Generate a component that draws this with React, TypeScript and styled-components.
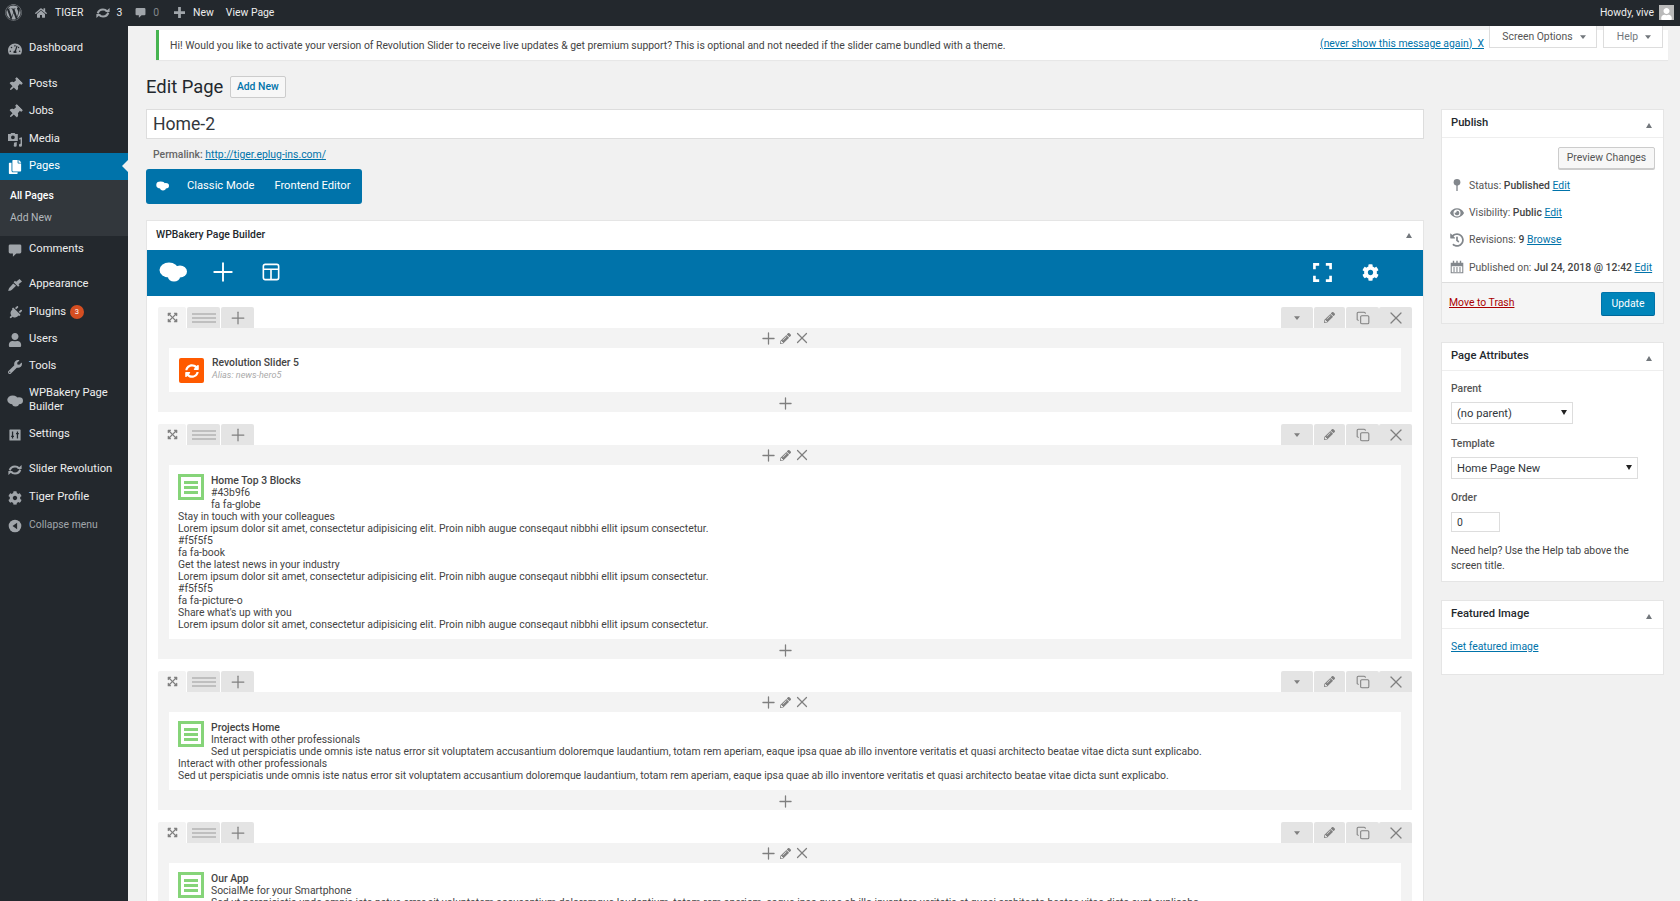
import React from "react";
import styled, { createGlobalStyle } from "styled-components";
import {
  FaWordpress, FaHome, FaTachometerAlt, FaThumbtack, FaCopy, FaPlug, FaUser, FaWrench,
  FaCog, FaExpandArrowsAlt, FaPencilAlt, FaEye, FaHistory, FaSyncAlt,
} from "react-icons/fa";
import { Plus, X, Copy } from "lucide-react";

const Global = createGlobalStyle`
  html, body { margin: 0; padding: 0; height: 901px; overflow: hidden; background: #f1f1f1; }
  body { font-family: Roboto, "Liberation Sans", sans-serif; font-size: 10.4px; color: #444; }
  * { box-sizing: border-box; }
  a { color: #0073aa; }
`;

/* ---------- hand drawn glyphs ---------- */
const UpdateGlyph = () => (
  <svg viewBox="0 0 20 14" width="100%" height="100%" fill="none" stroke="currentColor" strokeWidth="3">
    <path d="M2.500 7.500C3.500 4 6.500 2 10 2c2.400 0 4.300.9 5.600 2.400" />
    <path d="M17.500 6.500C16.500 10 13.500 12 10 12c-2.400 0-4.300-.9-5.600-2.400" />
    <path d="M13 5.600h6.500V0z" fill="currentColor" stroke="none" />
    <path d="M7 8.400H.5V14z" fill="currentColor" stroke="none" />
  </svg>
);
const BubbleGlyph = () => (
  <svg viewBox="0 0 20 20" width="100%" height="100%" fill="currentColor">
    <path d="M3 2h14a2 2 0 0 1 2 2v9a2 2 0 0 1-2 2h-5l-5 4.500V15H3a2 2 0 0 1-2-2V4a2 2 0 0 1 2-2z" />
  </svg>
);
const MediaGlyph = () => (
  <svg viewBox="0 0 20 20" width="100%" height="100%" fill="currentColor">
    <path d="M0 1.500h3.500L4.500 0h5l1 1.500H14v10H0zM7 3.500a2.700 2.700 0 1 0 0 5.400 2.700 2.700 0 0 0 0-5.400z" fillRule="evenodd" />
    <path d="M16 7l4-1v11.500a2.200 2.200 0 1 1-2-2.200V9l-2 .5zM8.500 14l4-1v4.500a2.200 2.200 0 1 1-2-2.200V15.200l-2 .5z" />
  </svg>
);
const BrushGlyph = () => (
  <svg viewBox="0 0 20 20" width="100%" height="100%" fill="currentColor">
    <path d="M20 5l-3.500-3.500-5 4-1.500-1.500-2 2 6.500 6.500 2-2-1.500-1.500z" />
    <path d="M7.500 8L2 14c-1.200 1.300-.8 2.800-2 4.200 2.200.5 4.500 0 6-1.700l5.500-5.500z" />
  </svg>
);
const CloudGlyph = () => (
  <svg viewBox="0 0 28 20" width="100%" height="100%" fill="currentColor">
    <ellipse cx="10" cy="8" rx="9.500" ry="7.500" />
    <ellipse cx="21" cy="9.500" rx="7" ry="6" />
    <ellipse cx="15" cy="15" rx="6" ry="4.500" />
  </svg>
);
const SettingsGlyph = () => (
  <svg viewBox="0 0 20 20" width="100%" height="100%">
    <rect x="2" y="2" width="16" height="16" rx="1" fill="currentColor" />
    <path d="M6.500 5v10M13.500 5v10M4.500 12h4M11.500 8h4" stroke="#23282d" strokeWidth="1.800" fill="none" />
  </svg>
);
const CollapseGlyph = () => (
  <svg viewBox="0 0 20 20" width="100%" height="100%">
    <circle cx="10" cy="10" r="9" fill="currentColor" />
    <path d="M13 5.500v9L6.500 10z" fill="#23282d" />
  </svg>
);
const PinGlyph = () => (
  <svg viewBox="0 0 12 20" width="100%" height="100%" fill="currentColor">
    <circle cx="6" cy="6" r="5" />
    <rect x="5" y="8" width="2" height="11" />
  </svg>
);
const CalendarGlyph = () => (
  <svg viewBox="0 0 20 20" width="100%" height="100%" fill="currentColor">
    <path d="M1 4h18v15H1zm1.500 5v8.500h15V9z" fillRule="evenodd" />
    <path d="M4 1h2v4.500H4zM9 1h2v4.500H9zM14 1h2v4.500h-2zM5 10h1.500v7H5zM9.200 10h1.500v7H9.200zM13.500 10H15v7h-1.500z" />
  </svg>
);
const LayoutGlyph = () => (
  <svg viewBox="0 0 20 20" width="100%" height="100%" fill="none" stroke="currentColor" strokeWidth="1.800">
    <rect x="1.500" y="1.500" width="17" height="17" rx="2" />
    <path d="M1.500 7h17M10 7v11.500" />
  </svg>
);
const FullscreenGlyph = () => (
  <svg viewBox="0 0 20 20" width="100%" height="100%" fill="none" stroke="currentColor" strokeWidth="2.800">
    <path d="M1.500 6.500v-5h5M13.500 1.500h5v5M18.500 13.500v5h-5M6.500 18.500h-5v-5" />
  </svg>
);
const BarsGlyph = () => (
  <svg viewBox="0 0 24 10" width="24" height="10" fill="none" stroke="#999" strokeWidth="1.200">
    <path d="M0 1h24M0 5h24M0 9h24" />
  </svg>
);
const CaretGlyph = () => (
  <svg viewBox="0 0 8 5" width="6" height="4" fill="currentColor"><path d="M0 0h8L4 5z" /></svg>
);
const BarPlusGlyph = () => (
  <svg viewBox="0 0 12 12" width="100%" height="100%" fill="none" stroke="currentColor" strokeWidth="3">
    <path d="M6 0v12M0 6h12" />
  </svg>
);

/* ---------- admin bar ---------- */
const AdminBar = styled.header`
  height: 26px;
  background: #23282d;
  color: #eee;
  font-size: 10.4px;
  display: flex;
  align-items: center;
  padding: 0 6px 1px 5px;
`;
const BarItem = styled.span<{ $ml: number; $gap?: number; $dim?: boolean }>`
  display: flex;
  align-items: center;
  margin-left: ${(p) => p.$ml}px;
  gap: ${(p) => p.$gap ?? 8}px;
  color: ${(p) => (p.$dim ? "#82878c" : "#eee")};
  white-space: nowrap;
`;
const BarIcon = styled.span<{ $w: number; $h?: number; $c?: string }>`
  display: flex;
  align-items: center;
  justify-content: center;
  width: ${(p) => p.$w}px;
  height: ${(p) => p.$h ?? p.$w}px;
  color: ${(p) => p.$c ?? "#a0a5aa"};
  svg { width: 100%; height: 100%; }
`;
const Howdy = styled.span`
  margin-left: auto;
  display: flex;
  align-items: center;
  gap: 5px;
`;
const Avatar = styled.span`
  width: 15px;
  height: 15px;
  background: #b9b9b9;
  color: #fff;
  display: flex;
  align-items: flex-end;
  justify-content: center;
  overflow: hidden;
  svg { width: 11px; height: 12px; }
`;

/* ---------- sidebar ---------- */
const Shell = styled.div`
  display: flex;
  height: 875px;
  overflow: hidden;
`;
const Sidebar = styled.nav`
  width: 128px;
  flex: none;
  background: #23282d;
  padding-top: 8.4px;
  font-size: 11.2px;
`;
const MenuItem = styled.div<{ $gap?: number; $active?: boolean; $tall?: boolean; $dim?: boolean }>`
  position: relative;
  display: flex;
  align-items: center;
  min-height: 27.2px;
  margin-top: ${(p) => p.$gap ?? 0}px;
  padding: ${(p) => (p.$tall ? "6px 8px 6px 8px" : "0 8px")};
  line-height: 14px;
  gap: 8px;
  background: ${(p) => (p.$active ? "#0073aa" : "transparent")};
  color: ${(p) => (p.$active ? "#fff" : p.$dim ? "#a0a5aa" : "#eee")};
  font-size: ${(p) => (p.$dim ? "10.4px" : "inherit")};
  ${(p) =>
    p.$active &&
    `&::after {
      content: "";
      position: absolute;
      right: 0;
      top: 50%;
      margin-top: -6px;
      border: 6px solid transparent;
      border-right-color: #f1f1f1;
      border-left-width: 0;
    }`}
`;
const MenuLabel = styled.span`
  display: inline-flex;
  align-items: center;
`;
const MenuIcon = styled.span<{ $c?: string; $turn?: number; $w?: number }>`
  flex: none;
  width: 13px;
  height: 14px;
  margin-top: 2px;
  display: flex;
  align-items: center;
  justify-content: center;
  color: ${(p) => p.$c ?? "#a0a5aa"};
  svg { width: ${(p) => p.$w ?? 14}px; height: 14px; flex: none; transform: rotate(${(p) => p.$turn ?? 0}deg); }
`;
const SubMenu = styled.div`
  height: 56px;
  background: #32373c;
  padding-top: 6px;
  font-size: 10.4px;
  color: #b4b9be;
`;
const SubItem = styled.div<{ $on?: boolean }>`
  height: 22px;
  line-height: 20px;
  padding-left: 10px;
  color: ${(p) => (p.$on ? "#fff" : "#b4b9be")};
  font-weight: ${(p) => (p.$on ? 500 : 400)};
`;
const Badge = styled.span`
  display: inline-block;
  width: 14px;
  height: 14px;
  line-height: 14px;
  border-radius: 50%;
  margin-left: 4px;
  background: #d54e21;
  color: #fff;
  font-size: 7.5px;
  text-align: center;
`;

/* ---------- content ---------- */
const Content = styled.main`
  position: relative;
  flex: 1;
  min-width: 0;
  padding: 0 16px 0 18px;
`;
const ScreenTabs = styled.div`
  position: absolute;
  top: 0;
  right: 17px;
  display: flex;
  gap: 6px;
  z-index: 2;
`;
const ScreenTab = styled.div<{ $w: number; $dim?: boolean }>`
  width: ${(p) => p.$w}px;
  height: 22px;
  background: #fff;
  border: 1px solid #ddd;
  border-top: 0;
  padding-left: 2px;
  display: flex;
  align-items: center;
  justify-content: center;
  gap: 7px;
  color: ${(p) => (p.$dim ? "#72777c" : "#555")};
  svg { color: #72777c; }
`;
const Notice = styled.div`
  margin: 4px -4px 0 10px;
  height: 30px;
  background: #fff;
  border-left: 3px solid #46b450;
  box-shadow: 0 1px 1px rgba(0, 0, 0, 0.04);
  padding: 0 184px 0 11px;
  display: flex;
  align-items: center;
  justify-content: space-between;
`;
const NoticeLink = styled.a`
  position: relative;
  top: -2px;
  font-size: 10.4px;
  text-decoration: underline;
  white-space: pre;
`;
const HeadRow = styled.div`
  margin-top: 16px;
  height: 22px;
  display: flex;
  align-items: center;
  gap: 7px;
`;
const PageTitle = styled.h1`
  margin: -2px 0 0;
  font-size: 18.4px;
  font-weight: 400;
  color: #23282d;
`;
const AddNew = styled.a`
  width: 56px;
  height: 22px;
  line-height: 20px;
  text-align: center;
  font-weight: 500;
  border: 1px solid #ccc;
  border-radius: 2px;
  background: #f7f7f7;
  text-decoration: none;
  padding-right: 1px;
`;
const Columns = styled.div`
  display: flex;
  gap: 17px;
  margin-top: 11px;
  align-items: flex-start;
`;
const MainCol = styled.div`
  flex: 1;
  min-width: 0;
`;
const SideCol = styled.aside`
  width: 223px;
  flex: none;
`;
const TitleInput = styled.input`
  display: block;
  width: 100%;
  height: 30px;
  border: 1px solid #ddd;
  background: #fff;
  padding: 0 6px;
  font: 400 17.6px Roboto, sans-serif;
  color: #32373c;
  outline: 0;
`;
const Permalink = styled.div`
  height: 30px;
  line-height: 31px;
  padding-left: 7px;
  color: #666;
  font-weight: 500;
  a { font-weight: 400; }
`;
const ModeBar = styled.div`
  display: flex;
  align-items: center;
  width: 216px;
  height: 35px;
  background: #0073aa;
  border-radius: 3px;
  color: #fff;
  padding: 0 0 2px 10px;
  font-size: 11.2px;
`;
const ModeLogo = styled.span`
  flex: none;
  width: 13px;
  height: 10px;
  margin-right: 18px;
  display: flex;
  svg { width: 13px; height: 10px; }
`;
const ModeLink = styled.span`
  margin-right: 20px;
  white-space: nowrap;
`;
const Builder = styled.section`
  margin-top: 16px;
  background: #fff;
  border: 1px solid #e5e5e5;
  border-bottom: 0;
`;
const BoxHead = styled.div`
  position: relative;
  height: 29px;
  display: flex;
  align-items: center;
  padding: 0 0 2px 9px;
  font-weight: 500;
  color: #23282d;
`;
const Fold = styled.span`
  position: absolute;
  right: 11px;
  top: 12px;
  border: 3.5px solid transparent;
  border-top: 0;
  border-bottom: 5px solid #72777c;
`;
const Toolbar = styled.div`
  height: 46px;
  background: #0073aa;
  color: #fff;
  display: flex;
  align-items: center;
  padding: 0 44px 2px 12px;
`;
const ToolButton = styled.span<{ $w: number; $h?: number; $ml?: number }>`
  width: ${(p) => p.$w}px;
  height: ${(p) => p.$h ?? p.$w}px;
  margin-left: ${(p) => p.$ml ?? 0}px;
  display: flex;
  align-items: center;
  justify-content: center;
  svg { width: 100%; height: 100%; }
`;
const ToolSpacer = styled.span`
  flex: 1;
`;
const Rows = styled.div`
  padding: 11px 11px 0;
`;
const Row = styled.article`
  margin-bottom: 12px;
`;
const RowTabs = styled.div`
  height: 21px;
  display: flex;
  justify-content: space-between;
`;
const TabGroup = styled.div<{ $joined?: boolean }>`
  display: flex;
  gap: ${(p) => (p.$joined ? 0 : 1)}px;
`;
const RowTab = styled.span<{ $w: number; $light?: boolean }>`
  width: ${(p) => p.$w}px;
  height: 21px;
  background: ${(p) => (p.$light ? "#f3f3f3" : "#e4e4e4")};
  border-radius: 2px 2px 0 0;
  color: #7f7f7f;
  display: flex;
  align-items: center;
  justify-content: center;
`;
const RowBody = styled.div`
  background: #f3f3f3;
  padding: 0 11px;
`;
const Strip = styled.div<{ $low?: boolean }>`
  height: 20px;
  padding-top: ${(p) => (p.$low ? 2 : 0)}px;
  display: flex;
  align-items: center;
  justify-content: center;
  gap: 2px;
  color: #7f7f7f;
`;
const Element = styled.div`
  background: #fff;
  padding: 10px 9px 8px;
  line-height: 12px;
  color: #444;
  font-size: 10.4px;
  &::after { content: ""; display: block; clear: both; }
`;
const TextLine = styled.div<{ $title?: boolean }>`
  font-weight: ${(p) => (p.$title ? 500 : 400)};
  color: #444;
`;
const TextIcon = styled.span`
  float: left;
  width: 26px;
  height: 26px;
  margin: -1px 7px 0 0;
  border: 3px solid #86d479;
  background: #fff;
  padding: 2px;
  display: flex;
  flex-direction: column;
  justify-content: center;
  gap: 2px;
  i { display: block; height: 3px; background: #86d479; margin: 0 1px; }
`;
const SliderEl = styled.div`
  height: 44px;
  background: #fff;
  display: flex;
  align-items: center;
  padding-left: 10px;
`;
const SliderIcon = styled.span`
  width: 25px;
  height: 25px;
  border-radius: 2px;
  background: #ff5a00;
  color: #fff;
  display: flex;
  align-items: center;
  justify-content: center;
  margin-right: 8px;
  margin-top: 1px;
`;
const SliderText = styled.div`
  margin-top: -2px;
`;
const SliderName = styled.div`
  font-weight: 500;
  color: #444;
  line-height: 13px;
`;
const SliderAlias = styled.div`
  font-size: 9.1px;
  font-style: italic;
  color: #aaa;
  line-height: 13px;
`;

/* ---------- side boxes ---------- */
const SideBox = styled.section`
  position: relative;
  background: #fff;
  border: 1px solid #e5e5e5;
  margin-bottom: 18px;
`;
const SideHead = styled.h2`
  margin: 0;
  height: 28px;
  line-height: 26px;
  padding-left: 9px;
  font-size: 11.2px;
  font-weight: 500;
  color: #23282d;
  border-bottom: 1px solid #eee;
`;
const SideFold = styled(Fold)`
  right: 11px;
  top: 13px;
`;
const PreviewRow = styled.div`
  display: flex;
  justify-content: flex-end;
  padding: 9px 8px 0;
  margin-bottom: 2.5px;
`;
const GhostButton = styled.span`
  width: 97px;
  height: 22px;
  line-height: 20px;
  text-align: center;
  background: #f7f7f7;
  border: 1px solid #ccc;
  border-radius: 2px;
  box-shadow: 0 1px 0 #ccc;
  color: #555;
`;
const MiscRow = styled.div`
  height: 27.4px;
  display: flex;
  align-items: center;
  padding-left: 8px;
  color: #555;
  gap: 5px;
  b { font-weight: 500; color: #444; }
`;
const MiscIcon = styled.span<{ $w?: number }>`
  width: 14px;
  height: 14px;
  flex: none;
  color: #82878c;
  display: flex;
  align-items: center;
  justify-content: center;
  svg { width: ${(p) => p.$w ?? 14}px; height: 14px; }
`;
const Actions = styled.div`
  margin-top: 1px;
  height: 41px;
  border-top: 1px solid #ddd;
  background: #f5f5f5;
  padding: 9px 8px 0 7px;
  display: flex;
  justify-content: space-between;
  align-items: flex-start;
`;
const TrashLink = styled.a`
  color: #a00;
  margin-top: 4px;
  text-decoration: underline;
`;
const UpdateButton = styled.span`
  width: 54px;
  height: 24px;
  line-height: 22px;
  text-align: center;
  background: #0085ba;
  border: 1px solid #0073aa;
  border-bottom-color: #006799;
  border-radius: 2px;
  color: #fff;
`;
const AttrBody = styled.div`
  padding: 0 10px 8.5px 9px;
`;
const AttrLabel = styled.div<{ $mt: number }>`
  margin-top: ${(p) => p.$mt}px;
  height: 14px;
  line-height: 14px;
  font-weight: 500;
  color: #555;
`;
const SelectWrap = styled.div<{ $w: number; $mt: number }>`
  position: relative;
  width: ${(p) => p.$w}px;
  height: 22px;
  margin-top: ${(p) => p.$mt}px;
  &::after {
    content: "";
    position: absolute;
    right: 6px;
    top: 8px;
    border: 3px solid transparent;
    border-bottom: 0;
    border-top: 5px solid #222;
    pointer-events: none;
  }
`;
const AttrSelect = styled.select`
  display: block;
  appearance: none;
  width: 100%;
  height: 100%;
  border: 1px solid #ddd;
  border-radius: 0;
  background: #fff;
  padding: 0 5px;
  font: 400 11.2px Roboto, sans-serif;
  color: #32373c;
  outline: 0;
`;
const OrderInput = styled.input`
  display: block;
  width: 49px;
  height: 20px;
  margin-top: 7px;
  border: 1px solid #ddd;
  padding: 0 5px;
  font: 400 10.4px Roboto, sans-serif;
  color: #32373c;
  outline: 0;
`;
const HelpText = styled.p`
  margin: 10.5px 0 0;
  line-height: 15px;
`;
const FeaturedBody = styled.div`
  height: 45px;
  padding: 11px 9px 0;
`;

const lorem = "Lorem ipsum dolor sit amet, consectetur adipisicing elit. Proin nibh augue conseqaut nibbhi ellit ipsum consectetur.";
const sed = "Sed ut perspiciatis unde omnis iste natus error sit voluptatem accusantium doloremque laudantium, totam rem aperiam, eaque ipsa quae ab illo inventore veritatis et quasi architecto beatae vitae dicta sunt explicabo.";
const interact = "Interact with other professionals";

const textRows: string[][] = [
  ["Home Top 3 Blocks", "#43b9f6", "fa fa-globe", "Stay in touch with your colleagues", lorem, "#f5f5f5", "fa fa-book", "Get the latest news in your industry", lorem, "#f5f5f5", "fa fa-picture-o", "Share what's up with you", lorem],
  ["Projects Home", interact, sed, interact, sed],
  ["Our App", "SocialMe for your Smartphone", sed],
];

const RowFrame = ({ children }: { children: React.ReactNode }) => (
  <Row>
    <RowTabs>
      <TabGroup>
        <RowTab $w={28} $light><FaExpandArrowsAlt size={11} /></RowTab>
        <RowTab $w={33}><BarsGlyph /></RowTab>
        <RowTab $w={33}><Plus size={20} strokeWidth={1.5} /></RowTab>
      </TabGroup>
      <TabGroup>
        <RowTab $w={32}><CaretGlyph /></RowTab>
        <RowTab $w={31}><FaPencilAlt size={11} /></RowTab>
        <TabGroup $joined>
          <RowTab $w={33}><Copy size={14} strokeWidth={1.8} /></RowTab>
          <RowTab $w={33}><X size={20} strokeWidth={1.5} /></RowTab>
        </TabGroup>
      </TabGroup>
    </RowTabs>
    <RowBody>
      <Strip>
        <Plus size={19} strokeWidth={1.6} />
        <FaPencilAlt size={11} />
        <X size={18} strokeWidth={1.6} />
      </Strip>
      {children}
      <Strip $low><Plus size={19} strokeWidth={1.6} /></Strip>
    </RowBody>
  </Row>
);

const menuTop = [
  { label: "Dashboard", icon: <FaTachometerAlt /> },
  { label: "Posts", icon: <FaThumbtack />, gap: 8.6, turn: 45 },
  { label: "Jobs", icon: <FaThumbtack />, turn: 45 },
  { label: "Media", icon: <MediaGlyph />, gap: 0.5 },
];

export default function App() {
  return (
    <>
      <Global />
      <AdminBar>
        <BarIcon $w={17}><FaWordpress /></BarIcon>
        <BarItem $ml={13} $gap={8}><BarIcon $w={12}><FaHome /></BarIcon>TIGER</BarItem>
        <BarItem $ml={13} $gap={6}><BarIcon $w={14} $h={10}><UpdateGlyph /></BarIcon>3</BarItem>
        <BarItem $ml={13} $gap={7} $dim><BarIcon $w={11}><BubbleGlyph /></BarIcon>0</BarItem>
        <BarItem $ml={15}><BarIcon $w={11}><BarPlusGlyph /></BarIcon>New</BarItem>
        <BarItem $ml={12}>View Page</BarItem>
        <Howdy>Howdy, vive<Avatar><FaUser /></Avatar></Howdy>
      </AdminBar>
      <Shell>
        <Sidebar>
          {menuTop.map((m) => (
            <MenuItem key={m.label} $gap={m.gap}>
              <MenuIcon $turn={m.turn}>{m.icon}</MenuIcon>
              <MenuLabel>{m.label}</MenuLabel>
            </MenuItem>
          ))}
          <MenuItem $active $gap={0.5}>
            <MenuIcon $c="#fff"><FaCopy /></MenuIcon>
            <MenuLabel>Pages</MenuLabel>
          </MenuItem>
          <SubMenu>
            <SubItem $on>All Pages</SubItem>
            <SubItem>Add New</SubItem>
          </SubMenu>
          <MenuItem $gap={-1}><MenuIcon><BubbleGlyph /></MenuIcon><MenuLabel>Comments</MenuLabel></MenuItem>
          <MenuItem $gap={8.2}><MenuIcon><BrushGlyph /></MenuIcon><MenuLabel>Appearance</MenuLabel></MenuItem>
          <MenuItem $gap={0.6}>
            <MenuIcon $turn={45}><FaPlug /></MenuIcon>
            <MenuLabel>Plugins<Badge>3</Badge></MenuLabel>
          </MenuItem>
          <MenuItem $gap={0.4}><MenuIcon><FaUser /></MenuIcon><MenuLabel>Users</MenuLabel></MenuItem>
          <MenuItem><MenuIcon><FaWrench /></MenuIcon><MenuLabel>Tools</MenuLabel></MenuItem>
          <MenuItem $tall>
            <MenuIcon $w={16}><CloudGlyph /></MenuIcon>
            <MenuLabel>WPBakery Page<br />Builder</MenuLabel>
          </MenuItem>
          <MenuItem><MenuIcon><SettingsGlyph /></MenuIcon><MenuLabel>Settings</MenuLabel></MenuItem>
          <MenuItem $gap={8.6}><MenuIcon><UpdateGlyph /></MenuIcon><MenuLabel>Slider Revolution</MenuLabel></MenuItem>
          <MenuItem><MenuIcon><FaCog /></MenuIcon><MenuLabel>Tiger Profile</MenuLabel></MenuItem>
          <MenuItem $dim $gap={1}><MenuIcon><CollapseGlyph /></MenuIcon><MenuLabel>Collapse menu</MenuLabel></MenuItem>
        </Sidebar>
        <Content>
          <ScreenTabs>
            <ScreenTab $w={108}>Screen Options <CaretGlyph /></ScreenTab>
            <ScreenTab $w={60} $dim>Help <CaretGlyph /></ScreenTab>
          </ScreenTabs>
          <Notice>
            <span>Hi! Would you like to activate your version of Revolution Slider to receive live updates &amp; get premium support? This is optional and not needed if the slider came bundled with a theme.</span>
            <NoticeLink href="#">(never show this message again)  X</NoticeLink>
          </Notice>
          <HeadRow>
            <PageTitle>Edit Page</PageTitle>
            <AddNew href="#">Add New</AddNew>
          </HeadRow>
          <Columns>
            <MainCol>
              <TitleInput defaultValue="Home-2" />
              <Permalink>Permalink: <a href="#">http://tiger.eplug-ins.com/</a></Permalink>
              <ModeBar>
                <ModeLogo><CloudGlyph /></ModeLogo>
                <ModeLink>Classic Mode</ModeLink>
                <ModeLink>Frontend Editor</ModeLink>
              </ModeBar>
              <Builder>
                <BoxHead>WPBakery Page Builder<Fold /></BoxHead>
                <Toolbar>
                  <ToolButton $w={28} $h={20}><CloudGlyph /></ToolButton>
                  <ToolButton $w={30} $ml={21}><Plus strokeWidth={1.5} /></ToolButton>
                  <ToolButton $w={18} $ml={24}><LayoutGlyph /></ToolButton>
                  <ToolSpacer />
                  <ToolButton $w={19}><FullscreenGlyph /></ToolButton>
                  <ToolButton $w={17} $ml={30}><FaCog /></ToolButton>
                </Toolbar>
                <Rows>
                  <RowFrame>
                    <SliderEl>
                      <SliderIcon><FaSyncAlt size={14} /></SliderIcon>
                      <SliderText>
                        <SliderName>Revolution Slider 5</SliderName>
                        <SliderAlias>Alias: news-hero5</SliderAlias>
                      </SliderText>
                    </SliderEl>
                  </RowFrame>
                  {textRows.map((lines) => (
                    <RowFrame key={lines[0]}>
                      <Element>
                        <TextIcon><i /><i /><i /></TextIcon>
                        {lines.map((l, i) => (
                          <TextLine key={i} $title={i === 0}>{l}</TextLine>
                        ))}
                      </Element>
                    </RowFrame>
                  ))}
                </Rows>
              </Builder>
            </MainCol>
            <SideCol>
              <SideBox>
                <SideHead>Publish</SideHead>
                <SideFold />
                <PreviewRow><GhostButton>Preview Changes</GhostButton></PreviewRow>
                <MiscRow><MiscIcon $w={8}><PinGlyph /></MiscIcon><span>Status: <b>Published</b> <a href="#">Edit</a></span></MiscRow>
                <MiscRow><MiscIcon><FaEye /></MiscIcon><span>Visibility: <b>Public</b> <a href="#">Edit</a></span></MiscRow>
                <MiscRow><MiscIcon><FaHistory /></MiscIcon><span>Revisions: <b>9</b> <a href="#">Browse</a></span></MiscRow>
                <MiscRow><MiscIcon><CalendarGlyph /></MiscIcon><span>Published on: <b>Jul 24, 2018 @ 12:42</b> <a href="#">Edit</a></span></MiscRow>
                <Actions>
                  <TrashLink href="#">Move to Trash</TrashLink>
                  <UpdateButton>Update</UpdateButton>
                </Actions>
              </SideBox>
              <SideBox>
                <SideHead>Page Attributes</SideHead>
                <SideFold />
                <AttrBody>
                  <AttrLabel $mt={11}>Parent</AttrLabel>
                  <SelectWrap $w={122} $mt={6}>
                    <AttrSelect defaultValue="none"><option value="none">(no parent)</option></AttrSelect>
                  </SelectWrap>
                  <AttrLabel $mt={13}>Template</AttrLabel>
                  <SelectWrap $w={187} $mt={6}>
                    <AttrSelect defaultValue="home"><option value="home">Home Page New</option></AttrSelect>
                  </SelectWrap>
                  <AttrLabel $mt={12}>Order</AttrLabel>
                  <OrderInput defaultValue="0" />
                  <HelpText>Need help? Use the Help tab above the screen title.</HelpText>
                </AttrBody>
              </SideBox>
              <SideBox>
                <SideHead>Featured Image</SideHead>
                <SideFold />
                <FeaturedBody><a href="#">Set featured image</a></FeaturedBody>
              </SideBox>
            </SideCol>
          </Columns>
        </Content>
      </Shell>
    </>
  );
}
